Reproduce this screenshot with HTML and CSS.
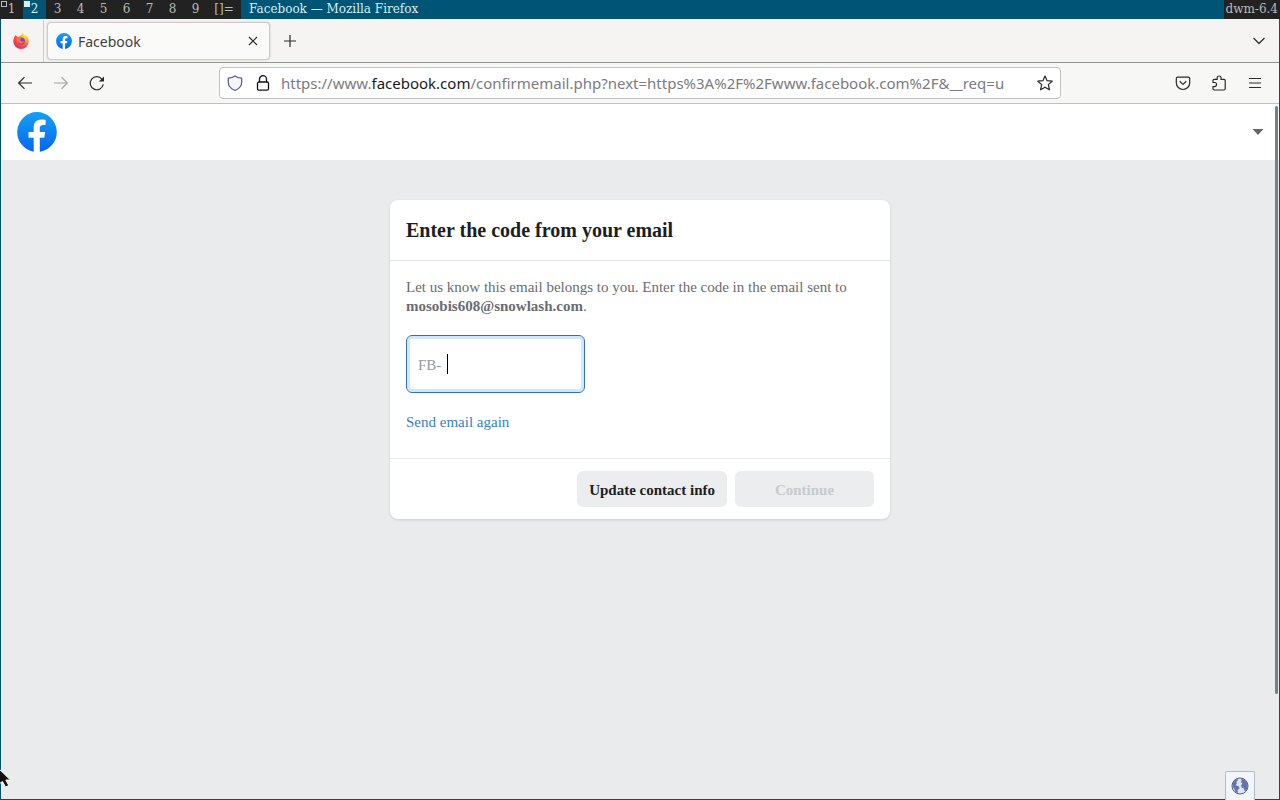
FILE: index.html
```html
<!DOCTYPE html>
<html lang="en">
<head>
<meta charset="utf-8">
<title>Facebook</title>
<link rel="stylesheet" href="styles.css">
</head>
<body>
<svg class="defs" width="0" height="0" aria-hidden="true">
  <defs>
    <linearGradient id="fb-blue" x1="0" y1="0" x2="0" y2="1">
      <stop offset="0" stop-color="#14a0f5"/><stop offset="1" stop-color="#0866ee"/>
    </linearGradient>
    <radialGradient id="fox-fire" cx=".8" cy=".15" r=".95">
      <stop offset="0" stop-color="#fff04a"/><stop offset=".35" stop-color="#ffa929"/>
      <stop offset=".65" stop-color="#ff5440"/><stop offset="1" stop-color="#e22866"/>
    </radialGradient>
    <symbol id="fb-logo" viewBox="0 0 40 40">
      <path fill="url(#fb-blue)" d="M20 0a20 20 0 0 1 3.200 39.700H16.800A20 20 0 0 1 20 0z"/>
      <path fill="#fff" d="M16.700 40V25.800h-5.200V20h5.200v-4.400c0-5.200 3-8 7.700-8 2 0 4.200.4 4.200.4v5h-2.500c-2.500 0-3.300 1.500-3.300 3.100V20h5.400l-.9 5.800h-4.500V40z"/>
    </symbol>
  </defs>
</svg>
<div class="desktop">
  <header class="statusbar">
    <nav class="tags" aria-label="Workspaces">
      <button class="tag occupied">1</button><button class="tag active">2</button><button class="tag">3</button><button class="tag">4</button><button class="tag">5</button><button class="tag">6</button><button class="tag">7</button><button class="tag">8</button><button class="tag">9</button>
      <button class="tag layout">[]=</button>
    </nav>
    <span class="window-title">Facebook — Mozilla Firefox</span>
    <span class="status">dwm-6.4</span>
  </header>

  <div class="window">
    <div class="tabstrip">
      <button class="pinned" aria-label="Firefox View">
        <svg width="16" height="16" viewBox="0 0 16 16">
          <path fill="url(#fox-fire)" d="M1.200 4.300 2.400 2l1.300 1.600 2.300.2L8.600 1.800 9.700 0l2 2.300 1-.5c2 1.700 3 3.900 3 6.500A7.600 7.600 0 0 1 8 16 7.700 7.700 0 0 1 .3 8.400c0-1.500.3-2.900.9-4.100z"/>
          <circle cx="8.400" cy="8" r="3.500" fill="#7543d5"/>
          <path fill="#ff7139" d="M3.700 5.100c1.900-.8 3.600-.2 4.700.8L7 7.100c1.500 1.800 2.600 1.500 4 .8-.2 2.300-2.200 3-4.200 2.300C4.500 9.300 3 7.500 3.700 5.100z"/>
        </svg>
      </button>
      <div class="tab">
        <svg width="16" height="16"><use href="#fb-logo"/></svg>
        <span class="tab-name">Facebook</span>
        <button class="icon-button small" aria-label="Close tab"><svg width="8" height="8" viewBox="0 0 8 8"><path d="m0 0 8 8M8 0 0 8"/></svg></button>
      </div>
      <button class="icon-button" aria-label="New tab"><svg width="12" height="12" viewBox="0 0 12 12"><path d="M6 0v12M0 6h12"/></svg></button>
      <button class="icon-button list-tabs" aria-label="List all tabs"><svg width="12" height="8" viewBox="0 0 12 8"><path d="m.5 1 5.500 5.500L11.500 1"/></svg></button>
    </div>

    <div class="toolbar">
      <div class="nav-buttons">
        <button class="icon-button" aria-label="Back"><svg width="16" height="16" viewBox="0 0 16 16"><path d="M15 8H2M7.500 2.200 1.700 8l5.800 5.800"/></svg></button>
        <button class="icon-button" aria-label="Forward" disabled><svg width="16" height="16" viewBox="0 0 16 16"><path d="M1 8h13M8.500 2.200 14.300 8l-5.800 5.800"/></svg></button>
        <button class="icon-button" aria-label="Reload"><svg width="16" height="16" viewBox="0 0 16 16"><path d="M14.200 9.300a6.500 6.500 0 1 1-1.300-5.100"/><path class="solid" d="M15 1.500v5H9.800z"/></svg></button>
      </div>
      <div class="urlbar">
        <button class="icon-button small" aria-label="Tracking protection"><svg class="shield" width="16" height="16" viewBox="0 0 16 16"><path d="M8 .9c2 1.400 4.200 2 6.700 2.300v4.100c0 3.700-2.400 6.400-6.700 8.200C3.700 13.700 1.300 11 1.300 7.300V3.200C3.800 2.900 6 2.300 8 .9z"/></svg></button>
        <button class="icon-button small" aria-label="Connection secure"><svg class="lock" width="14" height="16" viewBox="0 0 14 16"><rect x="1.500" y="7" width="11" height="8.200" rx="1.500"/><path d="M3.500 7V4.200a3.500 3.500 0 0 1 7 0V7"/></svg></button>
        <a class="url" href="#">https://www.<b>facebook.com</b>/confirmemail.php?next=https%3A%2F%2Fwww.facebook.com%2F&amp;__req=u</a>
        <button class="icon-button small" aria-label="Bookmark this page"><svg width="16" height="16" viewBox="0 0 16 16"><path d="m8 1 2.100 4.700 5.100.5-3.900 3.400 1.200 5.200L8 12.200l-4.500 2.600 1.200-5.200L.8 6.200l5.100-.5z"/></svg></button>
      </div>
      <div class="tool-buttons">
        <button class="icon-button" aria-label="Save to Pocket"><svg width="16" height="16" viewBox="0 0 16 16"><path d="M2.700 2.200h10.600c.8 0 1.400.6 1.400 1.400v4.200a6.700 6.700 0 0 1-13.400 0V3.600c0-.8.6-1.400 1.400-1.400z"/><path d="M4.700 6.300 8 9.400l3.300-3.100"/></svg></button>
        <button class="icon-button" aria-label="Extensions"><svg width="16" height="16" viewBox="0 0 16 16"><path d="M2 7.500V5.600c0-.8.4-1.200 1.200-1.200h3V2.900a1.900 1.900 0 0 1 3.800 0v1.500h3c.8 0 1.200.4 1.200 1.200v8.200c0 .8-.4 1.200-1.200 1.200H3.200c-.8 0-1.200-.4-1.200-1.200v-2.200h1.500a2 2 0 0 0 0-4.100z"/></svg></button>
        <button class="icon-button" aria-label="Application menu"><svg width="12" height="12" viewBox="0 0 12 12"><path d="M0 1.500h12M0 6h12M0 10.500h12"/></svg></button>
      </div>
    </div>

    <div class="page">
      <header class="site-header">
        <a href="#" class="logo" aria-label="Facebook"><svg width="40" height="40"><use href="#fb-logo"/></svg></a>
        <button class="account" aria-label="Account"><svg width="12" height="6" viewBox="0 0 12 6"><path d="M.5 0h11L6 6z"/></svg></button>
      </header>
      <main class="content">
        <form class="card">
          <h1>Enter the code from your email</h1>
          <div class="card-body">
            <p>Let us know this email belongs to you. Enter the code in the email sent to <strong>mosobis608@snowlash.com</strong>.</p>
            <div class="code-field">
              <label for="code">FB-</label>
              <span class="caret"></span>
              <input id="code" type="text">
            </div>
            <a href="#" class="resend">Send email again</a>
          </div>
          <footer class="card-footer">
            <button type="button">Update contact info</button>
            <button class="continue" disabled>Continue</button>
          </footer>
        </form>
      </main>
      <div class="scrollbar"></div>
    </div>
  </div>

  <button class="globe" aria-label="Language">
    <svg width="18" height="18" viewBox="0 0 18 18">
      <circle cx="9" cy="9" r="8" fill="#dce7f5" stroke="#525c7c"/>
      <path fill="#6673ad" d="M2.200 5 4.500 2.500 6.500 2l.5 1.500-1.800 1.200L6 6.500 4.500 8 8 9.500l.5 2-2 1.500.5 3-2.500-1L3 11.500 1.500 9.500zM9.500 1.500l3.500.8 2.500 2.200 1.200 3-.2 4-1.700 2.500-1.500-.5-.3-2-2.200-1L10 8.500l1.500-2L9.800 5l1-1.800z"/>
    </svg>
  </button>
  <svg class="pointer" width="12" height="22" viewBox="0 0 12 22" aria-hidden="true"><path d="M-4-2 10.500 12H5.800l3 5.500-3.300 1.500-3-5.500L-4 18z"/></svg>
</div>
</body>
</html>
```
FILE: styles.css
```css
* { box-sizing: border-box; }
body { margin: 0; }
button { margin: 0; padding: 0; border: 0; background: none; font: inherit; color: inherit; }
a { text-decoration: none; }
svg { display: block; }
.defs { position: absolute; }

.desktop {
  position: relative;
  display: flex;
  flex-direction: column;
  height: 100vh;
  overflow: hidden;
}

.statusbar {
  display: flex;
  flex: none;
  height: 19px;
  background: #005577;
  color: #d8eef2;
  font: 12px/19px "DejaVu Serif", serif;
}
.tags { display: flex; background: #222222; color: #bbbbbb; }
.tag { position: relative; width: 23px; }
.tag.active { background: #005577; color: #d8eef2; }
.tag.occupied::before,
.tag.active::before {
  content: "";
  position: absolute;
  top: 1px;
  left: 1px;
  width: 4px;
  height: 4px;
  border: 1px solid currentColor;
}
.tag.active::before { background: currentColor; }
.tag.layout { width: 34px; }
.window-title { flex: 1; padding-left: 8px; }
.status { padding: 0 2px; background: #222222; color: #bbbbbb; }

.window {
  display: flex;
  flex: 1;
  flex-direction: column;
  min-height: 0;
  border: 1px solid #005577;
  border-top: 0;
  font-family: "Noto Sans", sans-serif;
  color: #2b2a2e;
}
.icon-button { display: grid; flex: none; place-items: center; width: 36px; height: 32px; }
.icon-button.small { width: 28px; height: 28px; }
.icon-button svg { fill: none; stroke: #2b2a2e; stroke-width: 1.2; stroke-linejoin: round; overflow: visible; }
.icon-button .solid { fill: #2b2a2e; stroke: none; }
.icon-button:disabled { opacity: .4; }
.icon-button .shield { stroke: #535594; fill: #f4f3ff; }
.icon-button .lock { stroke: #111111; stroke-width: 1.3; }

.tabstrip {
  display: flex;
  flex: none;
  align-items: center;
  height: 44px;
  padding-top: 1px;
  background: #f5f4f2;
  border-bottom: 1px solid #929590;
}
.pinned { display: grid; place-items: center; align-self: stretch; width: 43px; padding-right: 3px; border-right: 1px solid #cccccc; }
.tab {
  display: flex;
  align-items: center;
  gap: 6px;
  width: 223px;
  height: 38px;
  margin: 0 2px 0 3px;
  padding: 0 2px 0 8px;
  border: 1px solid #d0c8cc;
  border-radius: 4px;
  background: #fafaf9;
  box-shadow: 0 0 2px #c8c4c0;
  font-size: 14px;
}
.tab-name { flex: 1; color: #414045; }
.list-tabs { margin-left: auto; margin-right: 2px; }

.toolbar {
  display: flex;
  flex: none;
  align-items: center;
  justify-content: space-between;
  height: 41px;
  padding: 0 6px;
  background: #f7f7f5;
  border-bottom: 1px solid #bfc1be;
}
.nav-buttons, .tool-buttons { display: flex; width: 108px; }
.urlbar {
  display: flex;
  align-items: center;
  flex: 0 1 842px;
  min-width: 0;
  height: 32px;
  padding: 0 1px;
  border: 1px solid #c2c2c4;
  border-radius: 4px;
  background: #ffffff;
  font-size: 15px;
}
.url { flex: 1; overflow: hidden; padding-left: 4px; color: #7b7b80; white-space: nowrap; }
.url b { color: #1a1a1e; font-weight: 400; }

.page {
  position: relative;
  flex: 1;
  min-height: 0;
  background: #e9ebed;
  font-family: "Liberation Serif", serif;
}
.site-header {
  display: flex;
  align-items: center;
  justify-content: space-between;
  height: 56px;
  padding: 0 15px 0 16px;
  background: #ffffff;
}
.account svg { fill: #65676b; }
.scrollbar {
  position: absolute;
  top: 2px;
  right: 1px;
  bottom: 105px;
  width: 3px;
  border-radius: 2px;
  background: #738087;
}
.content { padding: 40px 16px; }
.card {
  max-width: 500px;
  margin: 0 auto;
  border-radius: 8px;
  background: #ffffff;
  box-shadow: 0 1px 3px #0000001f;
  font-size: 15px;
  line-height: 19px;
}
.card h1 {
  margin: 0;
  padding: 18px 16px;
  border-bottom: 1px solid #e2e4e8;
  color: #1c1e21;
  font-size: 20px;
  line-height: 24px;
}
.card-body { padding: 17px 16px 26px; color: #6a6c70; }
.card-body p { margin: 0 0 19px; }
.code-field {
  display: flex;
  align-items: center;
  width: 179px;
  height: 58px;
  margin-bottom: 20px;
  padding: 0 8px;
  border: 1px solid #2f72b8;
  border-radius: 6px;
  box-shadow: inset 0 0 0 3px #d5e6fa;
}
.code-field label { padding: 2px 6px 0 3px; color: #96999f; }
.caret { flex: none; width: 1px; height: 20px; background: #000000; }
.code-field input { flex: 1; min-width: 0; padding: 0; border: 0; outline: 0; background: none; font: inherit; }
.resend { display: block; color: #3580cc; }
.card-footer {
  display: flex;
  justify-content: flex-end;
  gap: 8px;
  padding: 12px 16px;
  border-top: 1px solid #e5e7ea;
}
.card-footer button {
  height: 36px;
  padding: 2px 12px 0;
  border-radius: 6px;
  background: #ebedef;
  color: #1c1e21;
  font-weight: 700;
}
.card-footer .continue { width: 139px; color: #c8cacd; }

.globe {
  position: absolute;
  right: 25px;
  bottom: 0;
  display: grid;
  place-items: center;
  width: 30px;
  height: 29px;
  border: 1px solid #b4bac2;
  border-bottom: 0;
  border-radius: 2px 2px 0 0;
  background: #f2f6fb;
}
.pointer { position: absolute; left: 0; bottom: 10px; fill: #111111; stroke: #ffffff; }
```
